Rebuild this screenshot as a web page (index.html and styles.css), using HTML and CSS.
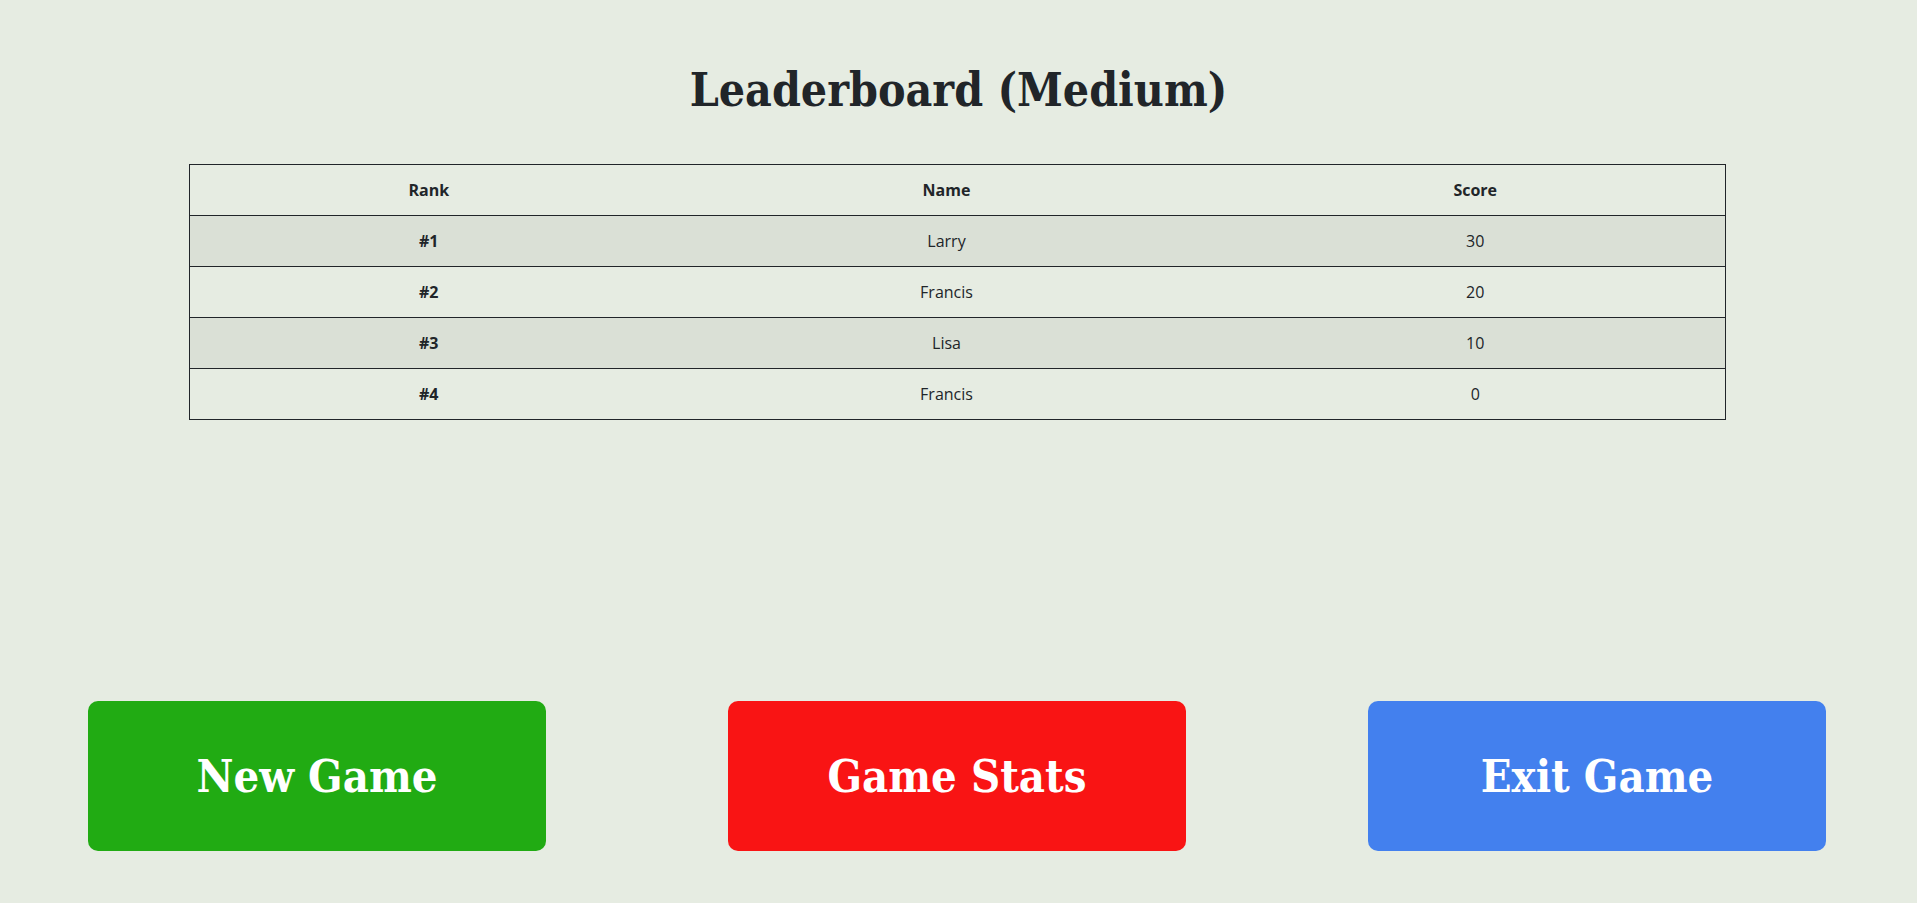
FILE: index.html
```html
<!DOCTYPE html>
<html lang="en">
<head>
<meta charset="utf-8">
<title>Leaderboard (Medium)</title>
<link rel="stylesheet" href="styles.css">
</head>
<body>
<main class="page">
  <h1 class="title">Leaderboard (Medium)</h1>
  <table class="board">
    <colgroup>
      <col class="col-rank">
      <col class="col-name">
      <col class="col-score">
    </colgroup>
    <thead>
      <tr><th>Rank</th><th>Name</th><th>Score</th></tr>
    </thead>
    <tbody>
      <tr class="odd"><th>#1</th><td>Larry</td><td>30</td></tr>
      <tr><th>#2</th><td>Francis</td><td>20</td></tr>
      <tr class="odd"><th>#3</th><td>Lisa</td><td>10</td></tr>
      <tr><th>#4</th><td>Francis</td><td>0</td></tr>
    </tbody>
  </table>
  <div class="actions">
    <button class="btn btn-green">New Game</button>
    <button class="btn btn-red">Game Stats</button>
    <button class="btn btn-blue">Exit Game</button>
  </div>
</main>
</body>
</html>
```

FILE: styles.css
```css
html, body {
  margin: 0;
  padding: 0;
}
body {
  background: #e6ece2;
  color: #212529;
  font-family: "Open Sans", "Noto Sans", sans-serif;
}
.page {
  padding-top: 65px;
}
.title {
  margin: 0;
  text-align: center;
  font-family: "DejaVu Serif", serif;
  font-stretch: condensed;
  font-weight: bold;
  font-size: 46px;
  line-height: 50px;
  color: #212529;
}
.board {
  margin: 49px 0 0 189px;
  width: 1536px;
  border-collapse: collapse;
  border: 1px solid #212529;
  table-layout: fixed;
  font-size: 16px;
}
.col-rank { width: 478px; }
.col-name { width: 558px; }
.col-score { width: 500px; }
.board th, .board td {
  padding: 13px 8px;
  line-height: 24px;
  text-align: center;
  border-bottom: 1px solid #212529;
  color: #212529;
}
.board th { font-weight: 700; }
.board td { font-weight: 400; }
.board tr.odd { background: #dae0d6; }
.actions {
  margin-top: 281px;
  display: flex;
  gap: 182px;
  padding: 0 88px;
}
.btn {
  flex: 0 0 458px;
  height: 150px;
  border: none;
  border-radius: 10px;
  color: #ffffff;
  font-family: "DejaVu Serif", serif;
  font-stretch: condensed;
  font-weight: bold;
  font-size: 45px;
  cursor: pointer;
}
.btn-green { background: #21ab13; }
.btn-red { background: #f91414; }
.btn-blue { background: #4380ee; }
```
